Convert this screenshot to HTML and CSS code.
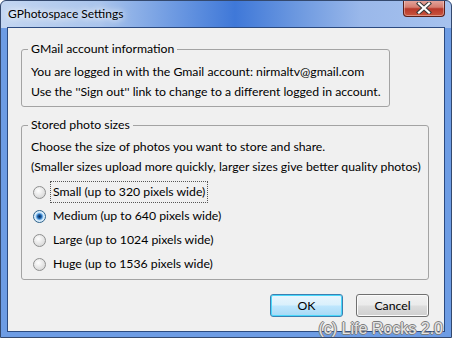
FILE: index.html
```html
<!DOCTYPE html>
<html lang="en">
<head>
    <meta charset="UTF-8">
    <title>GPhotospace Settings</title>
    <link rel="stylesheet" href="styles.css">
</head>
<body>
    <div class="window">
        <div class="titlebar">
            <span class="title">GPhotospace Settings</span>
            <button class="close" aria-label="Close">
                <svg width="16" height="12" viewBox="0 0 16 12">
                    <path d="M3 1.5 L13 10.5 M13 1.5 L3 10.5" stroke="#3a3a3a" stroke-width="4.2" stroke-linecap="square"/>
                    <path d="M3 1.5 L13 10.5 M13 1.5 L3 10.5" stroke="#ffffff" stroke-width="2.2" stroke-linecap="square"/>
                </svg>
            </button>
        </div>

        <div class="client">
            <fieldset class="group group-account">
                <legend>GMail account information</legend>
                <p>You are logged in with the Gmail account: nirmaltv@gmail.com</p>
                <p>Use the ''Sign out'' link to change to a different logged in account.</p>
            </fieldset>

            <fieldset class="group group-sizes">
                <legend>Stored photo sizes</legend>
                <p>Choose the size of photos you want to store and share.</p>
                <p>(Smaller sizes upload more quickly, larger sizes give better quality photos)</p>
                <div class="options">
                    <label class="option"><span class="radio"></span><span class="label focused">Small (up to 320 pixels wide)</span></label>
                    <label class="option"><span class="radio checked"></span><span class="label">Medium (up to 640 pixels wide)</span></label>
                    <label class="option"><span class="radio"></span><span class="label">Large (up to 1024 pixels wide)</span></label>
                    <label class="option"><span class="radio"></span><span class="label">Huge (up to 1536 pixels wide)</span></label>
                </div>
            </fieldset>

            <div class="actions">
                <button class="btn btn-default">OK</button>
                <button class="btn">Cancel</button>
            </div>
        </div>

        <div class="watermark">(c) Life Rocks 2.0</div>
    </div>
</body>
</html>
```

FILE: styles.css
```css
body {
    margin: 0;
    font-family: Lato, "Noto Sans", sans-serif;
    font-size: 12.25px;
    color: #000;
}
.window {
    position: relative;
    width: 452px;
    height: 338px;
    box-sizing: border-box;
    border: 1px solid #34496e;
    border-radius: 6px 6px 0 0;
    background:
        linear-gradient(90deg, #c3d6f1 0%, #a9c4ec 22%, #6f9be2 38%, #3f78d8 52%, #6d99e0 66%, #9ab8ea 80%, #a6c2ee 100%) top / 100% 27px no-repeat,
        #6d9ce4;
    display: flex;
    flex-direction: column;
    overflow: hidden;
    white-space: nowrap;
}
.titlebar {
    height: 26px;
    display: flex;
    align-items: flex-start;
    justify-content: space-between;
    padding-left: 7px;
}
.title {
    margin-top: 5px;
    font-size: 12px;
    text-shadow: 0 0 6px #ffffff, 0 0 10px #ffffff;
}
.close {
    width: 42px;
    height: 17px;
    margin: -1px 6px 0 0;
    padding: 0;
    border: 1px solid #5a1f1a;
    border-top: none;
    border-radius: 0 0 4px 4px;
    background: linear-gradient(#e5a8a0 0%, #d57d70 45%, #b8382a 55%, #c9553e 100%);
    box-shadow: inset 0 0 0 1px rgba(255, 255, 255, 0.35);
    display: flex;
    align-items: center;
    justify-content: center;
}
.client {
    flex: 1;
    margin: 0 6px 5px 6px;
    border: 1px solid #2b4a80;
    background: #f0f0f0;
    padding: 0 15px 0 13px;
}
.group {
    margin: 0;
    border: 1px solid #a3a3a3;
    border-radius: 3px;
    padding: 0 6px;
    min-width: 0;
}
.group legend {
    padding: 0 3px;
    line-height: 16px;
}
.group p {
    margin: 0 0 0 3px;
    line-height: 20px;
}
.group-account {
    margin-top: 13px;
    width: 355px;
    padding-top: 5px;
    padding-bottom: 4px;
}
.group-sizes {
    margin-top: 10px;
    padding-top: 4px;
    padding-bottom: 3px;
}
.options {
    margin-top: 3px;
    display: flex;
    flex-direction: column;
}
.option {
    height: 24px;
    display: flex;
    align-items: center;
    gap: 4px;
    padding-left: 5px;
}
.radio {
    width: 11px;
    height: 11px;
    border: 1px solid #8e8f8f;
    border-radius: 50%;
    background: radial-gradient(circle at 40% 35%, #ffffff 0%, #e6e6e6 50%, #cfcfcf 100%);
}
.radio.checked {
    border-color: #2c628b;
    background: radial-gradient(circle, #0a2a55 0%, #1d5fa8 25%, #6fb0e8 40%, #d8ecfb 55%, #eaf4fc 100%);
}
.label {
    padding: 1px 2px;
    border: 1px dotted transparent;
    line-height: 18px;
}
.label.focused {
    border-color: #555;
}
.actions {
    display: flex;
    justify-content: flex-end;
    gap: 13px;
    margin-top: 14px;
}
.btn {
    width: 73px;
    height: 23px;
    padding: 0;
    font-family: inherit;
    font-size: 12.25px;
    color: #000;
    border: 1px solid #707070;
    border-radius: 3px;
    background: linear-gradient(#f2f2f2 0%, #ebebeb 48%, #dddddd 52%, #cfcfcf 100%);
    box-shadow: inset 0 0 0 1px #fbfbfb;
}
.btn-default {
    border-color: #3c7fb1;
    background: linear-gradient(#eaf6fd 0%, #d9f0fc 48%, #bee6fd 52%, #a7d9f5 100%);
    box-shadow: inset 0 0 0 1px #48d8fb;
}
.watermark {
    position: absolute;
    right: 8px;
    bottom: -1px;
    font-family: "Liberation Sans", sans-serif;
    font-size: 16px;
    color: #e4e4e4;
    text-shadow: 1px 0 0 #7d7d7d, -1px 0 0 #7d7d7d, 0 1px 0 #7d7d7d, 0 -1px 0 #7d7d7d;
}
```
